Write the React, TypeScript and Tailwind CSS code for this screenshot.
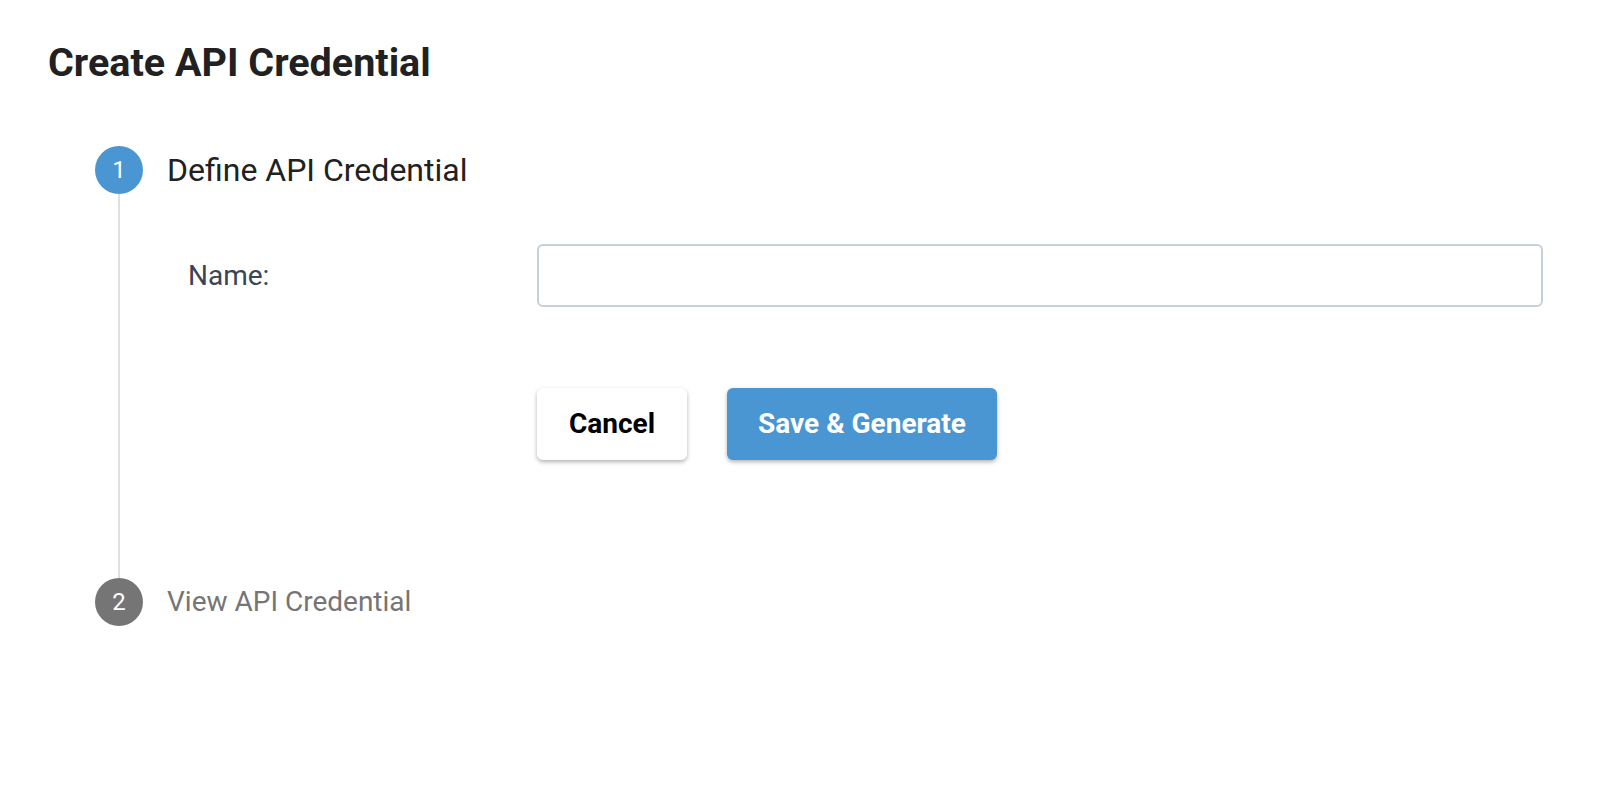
import React from "react";

export default function App() {
  return (
    <div
      className="w-[1608px] h-[798px] bg-white pl-[48px] pt-[39px] pr-[65px] text-[#212121]"
      style={{ fontFamily: "Roboto, 'Liberation Sans', sans-serif" }}
    >
      <h1 className="text-[39.5px] leading-[48px] font-bold text-[#212121]">Create API Credential</h1>

      <div className="mt-[59px] ml-[47px]">
        {/* Step 1 */}
        <div className="flex">
          <div className="flex flex-col items-center w-[48px] shrink-0">
            <div className="w-[48px] h-[48px] rounded-full bg-[#4a96d2] flex items-center justify-center text-white text-[24px] leading-none">
              1
            </div>
            <div className="w-[2px] flex-1 bg-[#e0e0e0]" />
          </div>
          <div className="ml-[24px] flex-1 pb-[118px]">
            <div className="h-[48px] flex items-center text-[32px] text-[#212121]">Define API Credential</div>

            <div className="mt-[50px] flex items-center">
              <div className="w-[370px] shrink-0 pl-[21px] text-[28px] text-[#3a4554]">Name:</div>
              <input
                type="text"
                className="flex-1 h-[63px] border-2 border-[#c6d0da] rounded-[6px] px-4 text-[24px] outline-none"
              />
            </div>

            <div className="mt-[81px] ml-[370px] flex gap-[40px]">
              <button className="w-[150px] h-[72px] rounded-[6px] bg-white text-black text-[28px] font-bold shadow-[0_2px_4px_rgba(0,0,0,0.3)]">
                Cancel
              </button>
              <button className="w-[270px] h-[72px] rounded-[6px] bg-[#4a96d2] text-white text-[28px] font-bold shadow-[0_2px_4px_rgba(0,0,0,0.3)]">
                Save &amp; Generate
              </button>
            </div>
          </div>
        </div>

        {/* Step 2 */}
        <div className="flex items-center">
          <div className="w-[48px] h-[48px] shrink-0 rounded-full bg-[#757575] flex items-center justify-center text-white text-[24px] leading-none">
            2
          </div>
          <div className="ml-[24px] text-[28px] text-[#757575]">View API Credential</div>
        </div>
      </div>
    </div>
  );
}
